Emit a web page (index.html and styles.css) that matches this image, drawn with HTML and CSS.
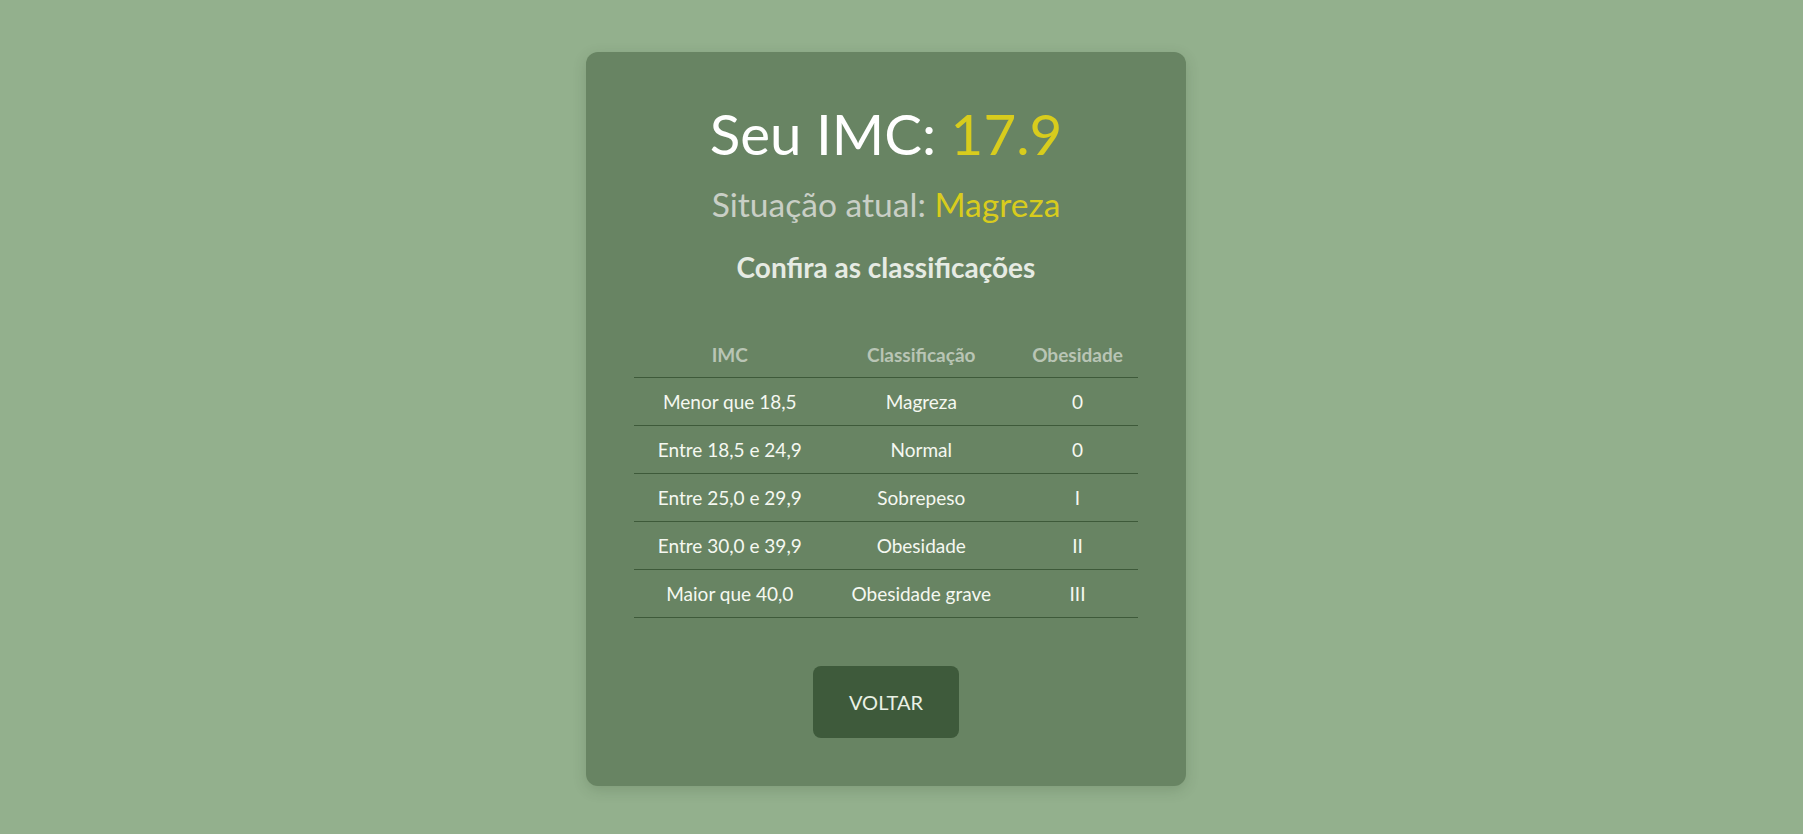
FILE: index.html
```html
<!DOCTYPE html>
<html lang="pt-BR">
<head>
<meta charset="UTF-8">
<title>Resultado IMC</title>
<link rel="stylesheet" href="styles.css">
</head>
<body>
<main class="card">
  <h1 class="result">Seu IMC: <span class="accent">17.9</span></h1>
  <h2 class="status">Situação atual: <span class="accent">Magreza</span></h2>
  <h3 class="subtitle">Confira as classificações</h3>
  <table class="table">
    <colgroup>
      <col class="col-wide">
      <col class="col-wide">
      <col class="col-narrow">
    </colgroup>
    <thead>
      <tr><th>IMC</th><th>Classificação</th><th>Obesidade</th></tr>
    </thead>
    <tbody>
      <tr><td>Menor que 18,5</td><td>Magreza</td><td>0</td></tr>
      <tr><td>Entre 18,5 e 24,9</td><td>Normal</td><td>0</td></tr>
      <tr><td>Entre 25,0 e 29,9</td><td>Sobrepeso</td><td>I</td></tr>
      <tr><td>Entre 30,0 e 39,9</td><td>Obesidade</td><td>II</td></tr>
      <tr><td>Maior que 40,0</td><td>Obesidade grave</td><td>III</td></tr>
    </tbody>
  </table>
  <div class="actions">
    <button class="btn">VOLTAR</button>
  </div>
</main>
</body>
</html>
```
FILE: styles.css
```css
* { box-sizing: border-box; }
html, body {
  margin: 0;
  padding: 0;
}
body {
  background: #93b08d;
  font-family: Lato, "Open Sans", sans-serif;
  color: #f3f6ef;
  min-height: 100vh;
  padding-right: 31px;
}
.card {
  width: 600px;
  margin: 52px auto 0;
  padding: 48px;
  background: #688463;
  border-radius: 12px;
  box-shadow: 0 4px 14px rgba(40, 60, 35, 0.18);
  text-align: center;
}
.result {
  margin: 0;
  font-size: 56.5px;
  font-weight: 400;
  line-height: 1.2;
  color: #ffffff;
}
.accent { color: #d8cc1d; }
.status {
  margin: 16px 0 0;
  font-size: 33.6px;
  font-weight: 400;
  line-height: 1.2;
  color: #c9cfc6;
}
.subtitle {
  margin: 27px 0 0;
  font-size: 28px;
  font-weight: 700;
  line-height: 1.2;
  color: #e6ebe3;
}
.table {
  width: 100%;
  margin-top: 46px;
  border-collapse: collapse;
  font-size: 19px;
  line-height: 21px;
}
.col-wide { width: 38%; }
.col-narrow { width: 24%; }
.table th {
  font-weight: 700;
  color: #b9c5b5;
  padding: 13px 0 12px;
  border-bottom: 1px solid #3e5a3a;
}
.table td {
  padding: 13px 0;
  color: #f5f8f1;
  border-bottom: 1px solid #3e5a3a;
}
.actions {
  display: flex;
  justify-content: center;
  margin-top: 48px;
}
.btn {
  width: 146px;
  height: 72px;
  border: none;
  border-radius: 8px;
  background: #3e5a3b;
  color: #e9f1e5;
  font-family: Lato, "Open Sans", sans-serif;
  font-size: 20px;
  cursor: pointer;
}
```
